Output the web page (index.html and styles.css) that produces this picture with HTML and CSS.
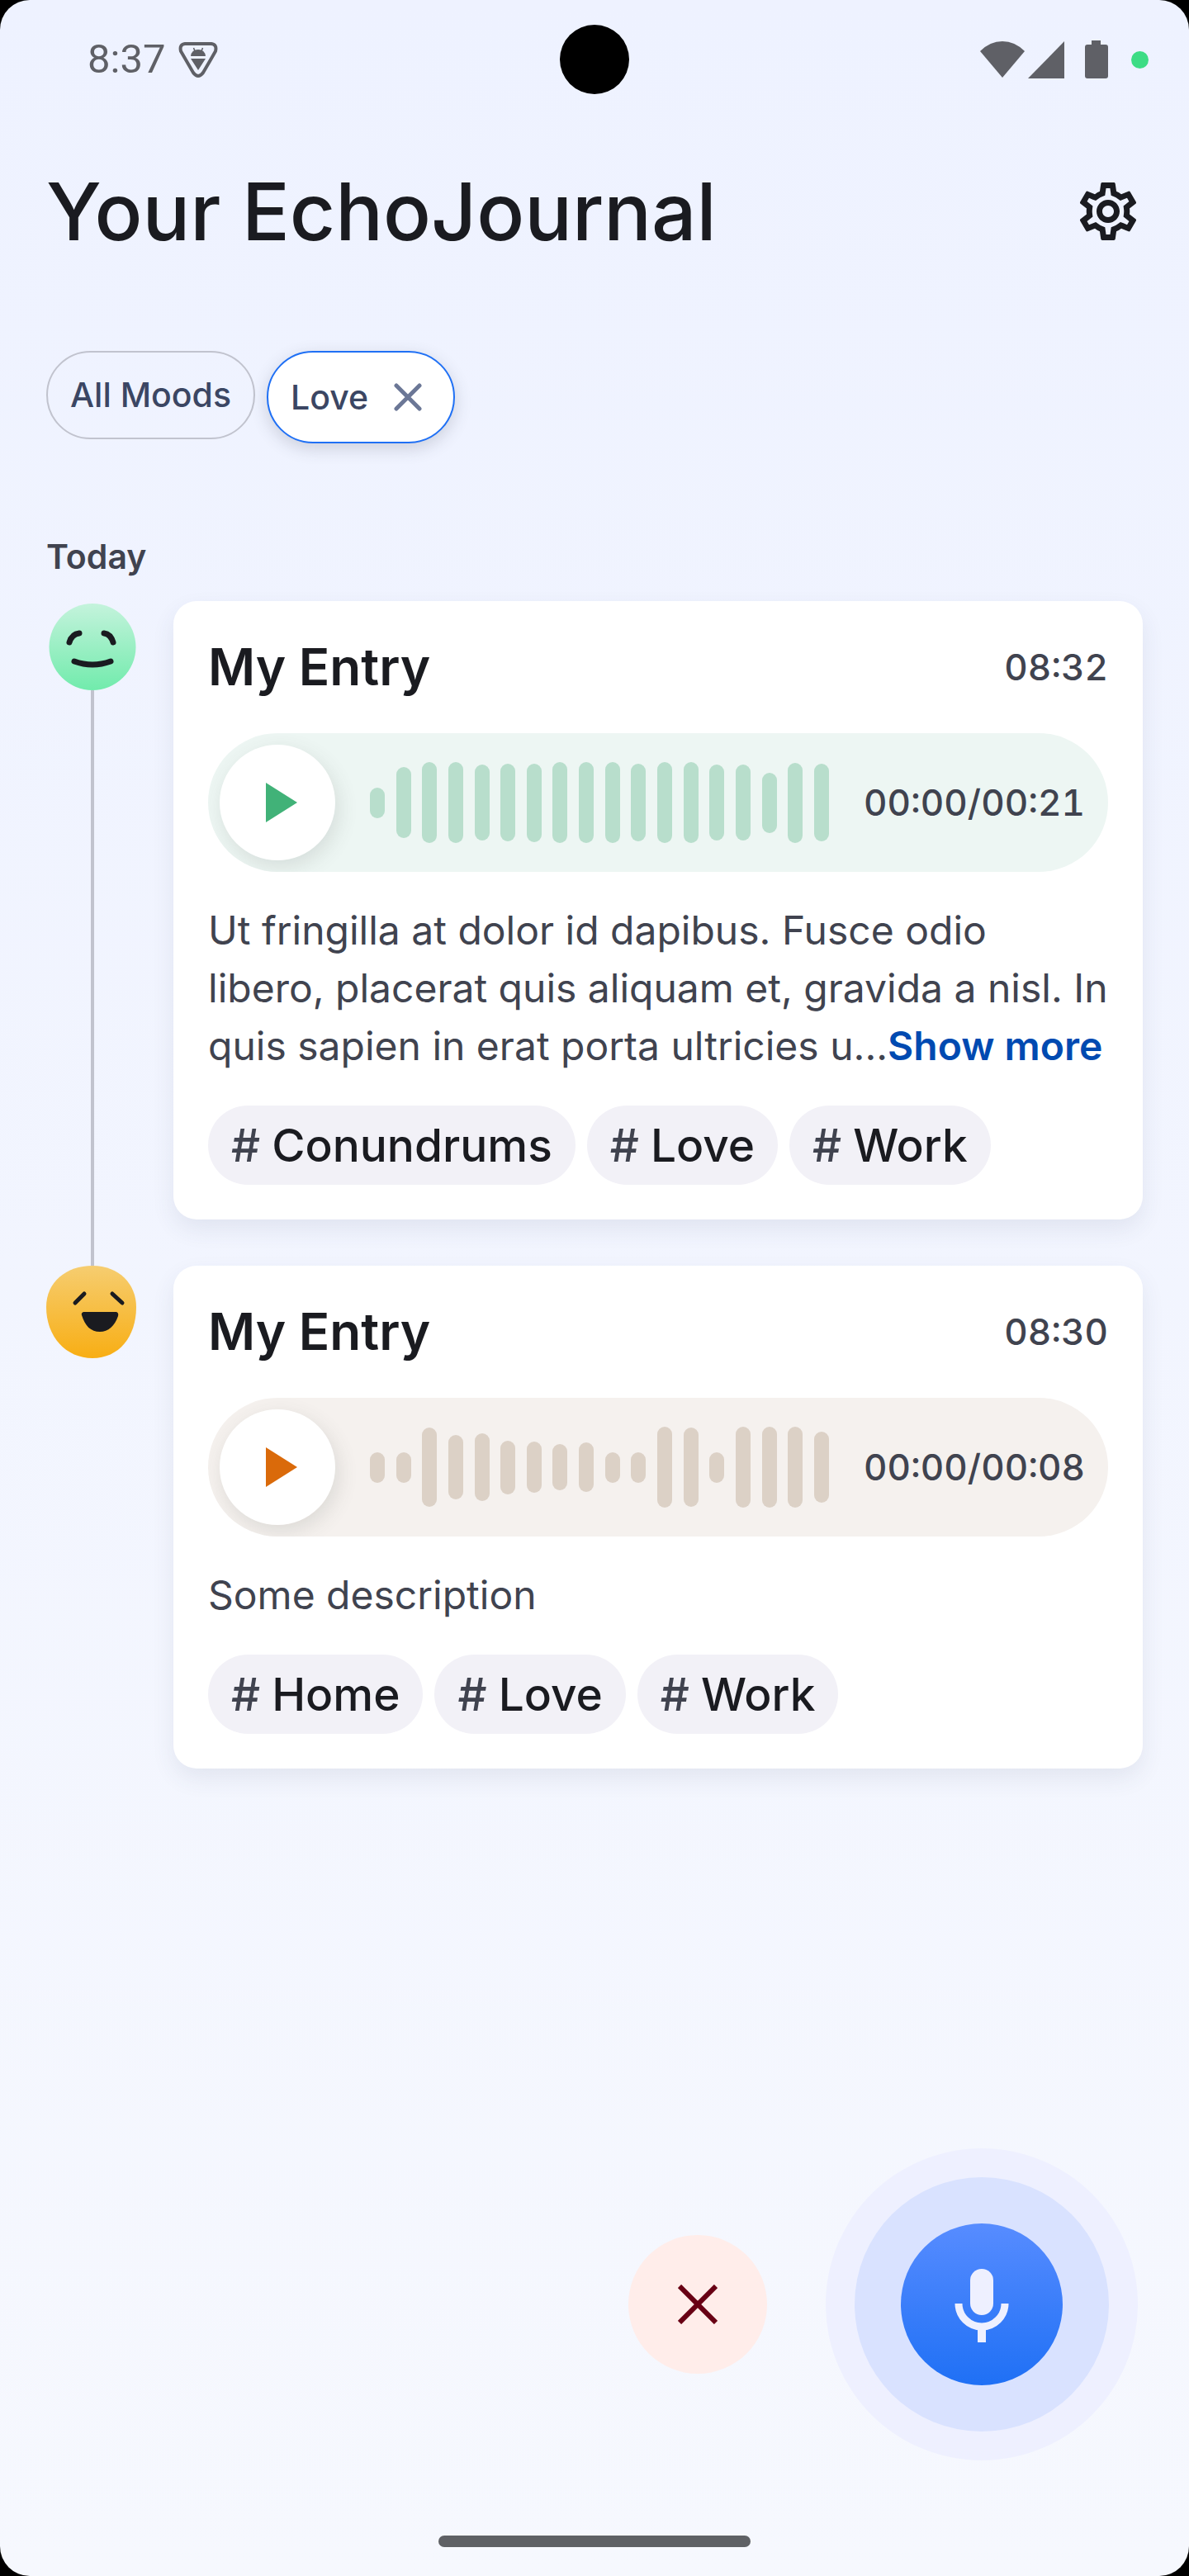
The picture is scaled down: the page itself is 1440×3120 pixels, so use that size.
FILE: index.html
```html
<!DOCTYPE html>
<html lang="en">
<head>
<meta charset="utf-8">
<meta name="viewport" content="width=device-width, initial-scale=1">
<title>Your EchoJournal</title>
<link rel="stylesheet" href="styles.css">
</head>
<body>
<div class="screen">
  <div class="status-bar">
    <div class="status-left">
      <span class="clock">8:37</span>
      <svg class="debug-icon" viewBox="0 0 48 44" aria-hidden="true">
        <path d="M8 3H40Q47 4 45 12L30 38Q24 46 18 38L3 12Q1 4 8 3Z" fill="none" stroke="currentColor" stroke-width="4"/>
        <path d="M20 12L18.500 8M28 12L29.500 8" fill="none" stroke="currentColor" stroke-width="1.500"/>
        <path d="M15 18Q16 10 24 10T33 18ZM15 21H33L24 35Z" fill="currentColor"/>
      </svg>
    </div>
    <span class="camera"></span>
    <div class="status-right">
      <svg class="wifi-icon" viewBox="0 0 54 46" aria-hidden="true"><path d="M0 13Q12 1 27 1T54 13L27 45Z" fill="currentColor"/></svg>
      <svg class="signal-icon" viewBox="0 0 44 46" aria-hidden="true"><path d="M0 46H44V1Z" fill="currentColor"/></svg>
      <svg class="battery-icon" viewBox="0 0 28 46" aria-hidden="true"><path d="M8 0H19V5H25Q28 5 28 8V43Q28 46 25 46H3Q0 46 0 43V8Q0 5 3 5H8Z" fill="currentColor"/></svg>
      <span class="privacy-dot"></span>
    </div>
  </div>

  <header class="header">
    <h1 class="header-title">Your EchoJournal</h1>
    <button class="icon-button" type="button" aria-label="Settings">
      <svg class="gear-icon" viewBox="0 0 24 24" aria-hidden="true"><path fill="currentColor" d="M19.430 12.980c.04-.32.07-.64.07-.98 0-.34-.03-.66-.07-.98l2.110-1.650c.19-.15.24-.42.12-.64l-2-3.460c-.09-.16-.26-.25-.44-.25-.06 0-.12.01-.17.03l-2.490 1c-.52-.4-1.080-.73-1.690-.98l-.38-2.650C14.460 2.180 14.250 2 14 2h-4c-.25 0-.46.18-.49.42l-.38 2.650c-.61.25-1.170.59-1.690.98l-2.490-1c-.06-.02-.12-.03-.18-.03-.17 0-.34.09-.43.25l-2 3.460c-.13.22-.07.49.12.64l2.110 1.650c-.04.32-.07.65-.07.98 0 .33.03.66.07.98l-2.110 1.650c-.19.15-.24.42-.12.64l2 3.460c.09.16.26.25.44.25.06 0 .12-.01.17-.03l2.490-1c.52.4 1.080.73 1.690.98l.38 2.650c.03.24.24.42.49.42h4c.25 0 .46-.18.49-.42l.38-2.650c.61-.25 1.170-.59 1.690-.98l2.490 1c.06.02.12.03.18.03.17 0 .34-.09.43-.25l2-3.460c.12-.22.07-.49-.12-.64l-2.110-1.650zm-1.980-1.710c.04.31.05.52.05.73 0 .21-.02.43-.05.73l-.14 1.130.89.7 1.080.84-.7 1.210-1.270-.51-1.040-.42-.9.68c-.43.32-.84.56-1.250.73l-1.060.43-.16 1.130-.2 1.350h-1.400l-.19-1.350-.16-1.130-1.060-.43c-.43-.18-.83-.41-1.230-.71l-.91-.7-1.060.43-1.270.51-.7-1.210 1.080-.84.89-.7-.14-1.130c-.03-.31-.05-.54-.05-.74s.02-.43.05-.73l.14-1.130-.89-.7-1.080-.84.7-1.210 1.270.51 1.040.42.9-.68c.43-.32.84-.56 1.250-.73l1.060-.43.16-1.130.2-1.350h1.390l.19 1.350.16 1.130 1.060.43c.43.18.83.41 1.230.71l.91.7 1.060-.43 1.270-.51.7 1.210-1.070.85-.89.7.14 1.130zM12 8c-2.210 0-4 1.790-4 4s1.790 4 4 4 4-1.790 4-4-1.790-4-4-4zm0 6c-1.100 0-2-.9-2-2s.9-2 2-2 2 .9 2 2-.9 2-2 2z"/></svg>
    </button>
  </header>

  <div class="filters">
    <button class="filter" type="button">All Moods</button>
    <button class="filter filter-active" type="button">Love
      <svg class="clear-icon" viewBox="0 0 56 56" aria-hidden="true"><path d="M14 14L42 42M42 14L14 42" fill="none" stroke="#6b7796" stroke-width="5" stroke-linecap="round"/></svg>
    </button>
  </div>

  <main class="journal">
    <h2 class="day">Today</h2>

    <article class="entry">
      <div class="rail">
        <svg class="mood mood-peaceful" viewBox="0 0 112 108" role="img" aria-label="Peaceful">
          <defs><linearGradient id="peaceful" x1="0" y1="0" x2="0" y2="1"><stop offset="0" stop-color="#c4f3dc"/><stop offset="1" stop-color="#71ebac"/></linearGradient></defs>
          <circle cx="56" cy="55.500" r="52.500" fill="url(#peaceful)"/>
          <path d="M28 50Q31 40 40 39M70 39Q78 40 81 50M34 73Q56 81 78 73" fill="none" stroke="#1a1b20" stroke-width="7" stroke-linecap="round"/>
        </svg>
        <span class="rail-line"></span>
      </div>
      <div class="card peaceful">
        <div class="card-head">
          <h3 class="card-title">My Entry</h3>
          <time class="card-time">08:32</time>
        </div>
        <div class="player">
          <button class="play" type="button" aria-label="Play"><svg class="play-icon" viewBox="0 0 38 48" aria-hidden="true"><path d="M0 0L38 24L0 48Z" fill="currentColor"/></svg></button>
          <div class="wave" aria-hidden="true">
            <i style="height:37px"></i><i style="height:86px"></i><i style="height:98px"></i><i style="height:98px"></i><i style="height:92px"></i><i style="height:94px"></i><i style="height:95px"></i><i style="height:98px"></i><i style="height:98px"></i><i style="height:98px"></i><i style="height:94px"></i><i style="height:98px"></i><i style="height:98px"></i><i style="height:92px"></i><i style="height:92px"></i><i style="height:73px"></i><i style="height:97px"></i><i style="height:94px"></i>
          </div>
          <span class="duration">00:00/00:21</span>
        </div>
        <p class="description">Ut fringilla at dolor id dapibus. Fusce odio libero, placerat quis aliquam et, gravida a nisl. In quis sapien in erat porta ultricies u...<button class="show-more" type="button">Show more</button></p>
        <ul class="tags">
          <li class="tag"><span class="hash">#</span>Conundrums</li>
          <li class="tag"><span class="hash">#</span>Love</li>
          <li class="tag"><span class="hash">#</span>Work</li>
        </ul>
      </div>
    </article>

    <article class="entry">
      <div class="rail">
        <svg class="mood mood-excited" viewBox="0 0 112 112" role="img" aria-label="Excited">
          <defs><linearGradient id="excited" x1="0" y1="0" x2="0" y2="1"><stop offset="0" stop-color="#f6cd70"/><stop offset="1" stop-color="#f8ae14"/></linearGradient></defs>
          <path d="M56 0C88 0 109 22 109 50C109 86 88 112 56 112C24 112 0 86 0 50C0 20 24 0 56 0Z" fill="url(#excited)"/>
          <path d="M35 45L46 34M80 34L92 45" fill="none" stroke="#1a1b20" stroke-width="5" stroke-linecap="round"/>
          <path d="M45 56H85Q88 57 87 61C83 73 75 80 65 80C54 80 47 73 43 60Q42 57 45 56Z" fill="#1a1b20"/>
        </svg>
      </div>
      <div class="card excited">
        <div class="card-head">
          <h3 class="card-title">My Entry</h3>
          <time class="card-time">08:30</time>
        </div>
        <div class="player">
          <button class="play" type="button" aria-label="Play"><svg class="play-icon" viewBox="0 0 38 48" aria-hidden="true"><path d="M0 0L38 24L0 48Z" fill="currentColor"/></svg></button>
          <div class="wave" aria-hidden="true">
            <i style="height:37px"></i><i style="height:37px"></i><i style="height:96px"></i><i style="height:78px"></i><i style="height:82px"></i><i style="height:65px"></i><i style="height:62px"></i><i style="height:56px"></i><i style="height:60px"></i><i style="height:37px"></i><i style="height:37px"></i><i style="height:98px"></i><i style="height:96px"></i><i style="height:37px"></i><i style="height:98px"></i><i style="height:98px"></i><i style="height:98px"></i><i style="height:86px"></i>
          </div>
          <span class="duration">00:00/00:08</span>
        </div>
        <p class="description">Some description</p>
        <ul class="tags">
          <li class="tag"><span class="hash">#</span>Home</li>
          <li class="tag"><span class="hash">#</span>Love</li>
          <li class="tag"><span class="hash">#</span>Work</li>
        </ul>
      </div>
    </article>
  </main>

  <footer class="recorder">
    <button class="cancel" type="button" aria-label="Cancel recording">
      <svg class="cancel-icon" viewBox="0 0 48 48" aria-hidden="true"><path d="M2 2L46 46M46 2L2 46" fill="none" stroke="currentColor" stroke-width="6"/></svg>
    </button>
    <div class="ring-outer">
      <div class="ring-inner">
        <button class="record" type="button" aria-label="Record">
          <svg class="mic-icon" viewBox="0 0 112 112" aria-hidden="true">
            <rect x="42" y="13" width="28" height="56" rx="14" fill="currentColor"/>
            <path d="M28 55A28 28 0 0 0 84 55" fill="none" stroke="currentColor" stroke-width="9"/>
            <path d="M51 84H61V102H51Z" fill="currentColor"/>
          </svg>
        </button>
      </div>
    </div>
  </footer>
  <span class="home-handle"></span>
</div>
</body>
</html>
```
FILE: styles.css
```css
* {
  box-sizing: border-box;
}

body {
  margin: 0;
  background: #000;
  color: #1a1b20;
  font-family: "Inter", "Liberation Sans", sans-serif;
}

h1, h2, h3, p, ul {
  margin: 0;
  padding: 0;
}

button {
  margin: 0;
  padding: 0;
  border: 0;
  background: none;
  color: inherit;
  font: inherit;
  cursor: pointer;
}

svg {
  display: block;
  flex: none;
}

.screen {
  display: flex;
  flex-direction: column;
  min-height: 100vh;
  padding-bottom: 35px;
  border-radius: 36px;
  background: linear-gradient(#eef2ff, #f6f8fe);
}

/* Status bar */
.status-bar {
  display: grid;
  grid-template-columns: minmax(0, 1fr) auto minmax(0, 1fr);
  align-items: center;
  height: 144px;
  color: #5f6066;
}

.status-left,
.status-right {
  display: flex;
  align-items: center;
}

.status-left {
  gap: 16px;
  padding-left: 106px;
}

.status-right {
  justify-content: flex-end;
  padding-right: 49px;
}

.clock {
  font: 400 49px/56px "Roboto", sans-serif;
}

.debug-icon {
  width: 48px;
  height: 44px;
}

.camera {
  width: 84px;
  height: 84px;
  border-radius: 50%;
  background: #000;
}

.wifi-icon {
  width: 54px;
  height: 46px;
}

.signal-icon {
  width: 44px;
  height: 46px;
  margin-left: 4px;
}

.battery-icon {
  width: 28px;
  height: 46px;
  margin-left: 25px;
}

.privacy-dot {
  width: 21px;
  height: 21px;
  margin-left: 28px;
  border-radius: 50%;
  background: #3ddc84;
}

/* Header */
.header {
  display: flex;
  align-items: center;
  justify-content: space-between;
  padding: 56px 56px 0;
}

.header-title {
  font-size: 96px;
  line-height: 112px;
  font-weight: 500;
}

.gear-icon {
  width: 84px;
  height: 84px;
}

/* Filters */
.filters {
  display: flex;
  align-items: flex-start;
  gap: 14px;
  padding: 113px 56px 0;
}

.filter {
  display: flex;
  align-items: center;
  gap: 20px;
  padding: 26px 27px;
  border: 2px solid #c1c3ce;
  border-radius: 56px;
  color: #3b4663;
  font-size: 41px;
  line-height: 51px;
  font-weight: 500;
}

.filter-active {
  border-color: #1f70f5;
  background: #fff;
  box-shadow: 0 6px 20px rgba(60, 65, 80, 0.2);
}

.clear-icon {
  width: 56px;
  height: 56px;
}

/* Journal */
.journal {
  padding: 112px 56px 56px;
}

.day {
  margin-bottom: 28px;
  color: #40434f;
  font-size: 41px;
  line-height: 51px;
  font-weight: 600;
}

.entry {
  display: grid;
  grid-template-columns: 112px minmax(0, 1fr);
  column-gap: 42px;
}

.rail {
  display: flex;
  flex-direction: column;
  align-items: center;
}

.mood {
  width: 112px;
}

.mood-peaceful {
  height: 108px;
}

.mood-excited {
  height: 112px;
}

.rail-line {
  flex: 1;
  width: 4px;
  background: #c1c3ce;
}

.card {
  margin-bottom: 56px;
  padding: 42px;
  border-radius: 28px;
  background: #fff;
  box-shadow: 0 12px 28px rgba(60, 70, 100, 0.09);
}

.card-head {
  display: flex;
  align-items: center;
  justify-content: space-between;
  margin-bottom: 42px;
}

.card-title {
  font-size: 62px;
  line-height: 76px;
  font-weight: 600;
}

.card-time,
.duration {
  color: #40434f;
  font-size: 44px;
  line-height: 56px;
  font-weight: 500;
  font-variant-numeric: tabular-nums;
}

/* Player */
.player {
  display: flex;
  align-items: center;
  height: 168px;
  padding: 14px 28px 14px 14px;
  border-radius: 84px;
  background: var(--track);
  overflow: hidden;
}

.peaceful {
  --track: #edf6f3;
  --bar: #b8decc;
  --accent: #41b278;
}

.excited {
  --track: #f5f1ee;
  --bar: #dcd1c6;
  --accent: #da6a0a;
}

.play {
  display: flex;
  flex: none;
  align-items: center;
  justify-content: center;
  width: 140px;
  height: 140px;
  padding-left: 10px;
  border-radius: 50%;
  background: #fff;
  box-shadow: 4px 8px 24px rgba(70, 80, 70, 0.14);
  color: var(--accent);
}

.play-icon {
  width: 38px;
  height: 48px;
}

.wave {
  display: flex;
  flex: 1;
  align-items: center;
  justify-content: space-between;
  margin: 0 42px;
}

.wave i {
  width: 18px;
  border-radius: 9px;
  background: var(--bar);
}

/* Description and tags */
.description {
  margin-top: 36px;
  color: #40434f;
  font-size: 48px;
  line-height: 70px;
}

.show-more {
  color: #004ab1;
  font-weight: 600;
}

.tags {
  display: flex;
  flex-wrap: wrap;
  gap: 14px;
  margin-top: 37px;
  list-style: none;
}

.tag {
  display: flex;
  gap: 14px;
  padding: 14px 28px;
  border-radius: 48px;
  background: #f2f1f7;
  font-size: 55px;
  line-height: 68px;
  font-weight: 500;
}

.hash {
  color: #40434f;
}

/* Recorder */
.recorder {
  display: flex;
  align-items: center;
  justify-content: flex-end;
  gap: 71px;
  margin-top: auto;
  padding: 0 62px 91px 0;
}

.cancel {
  display: grid;
  place-items: center;
  width: 168px;
  height: 168px;
  border-radius: 50%;
  background: #ffedea;
  color: #680014;
}

.cancel-icon {
  width: 48px;
  height: 48px;
}

.ring-outer {
  padding: 35px;
  border-radius: 50%;
  background: #eef0ff;
}

.ring-inner {
  padding: 56px;
  border-radius: 50%;
  background: #d9e2ff;
}

.record {
  display: grid;
  place-items: center;
  width: 196px;
  height: 196px;
  border-radius: 50%;
  background: linear-gradient(#578cff, #1f70f5);
  color: #eef0ff;
}

.mic-icon {
  width: 112px;
  height: 112px;
}

.home-handle {
  align-self: center;
  width: 378px;
  height: 14px;
  border-radius: 7px;
  background: #5f6165;
}
```
